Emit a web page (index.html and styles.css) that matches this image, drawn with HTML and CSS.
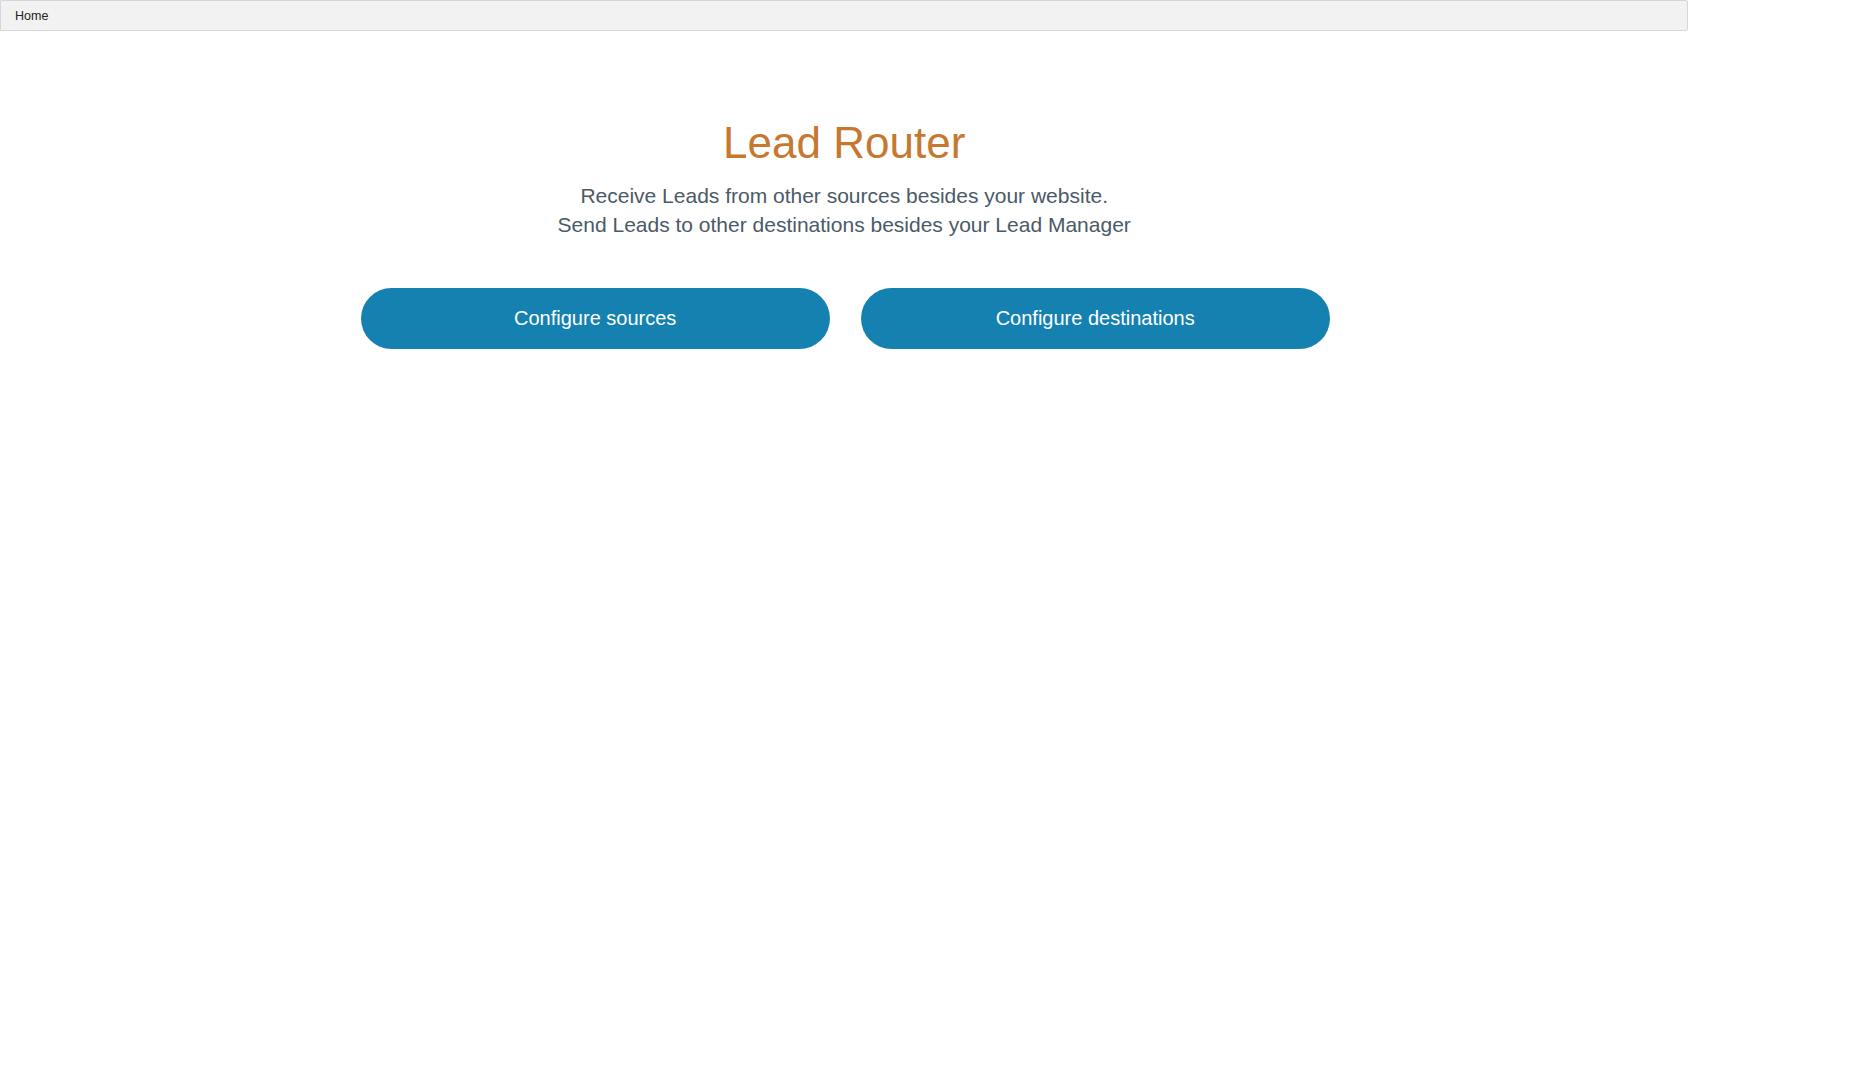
FILE: index.html
```html
<!DOCTYPE html>
<html lang="en">
<head>
<meta charset="utf-8">
<title>Lead Router</title>
<link rel="stylesheet" href="styles.css">
</head>
<body>
<div class="page">
  <nav class="breadcrumb"><span class="crumb">Home</span></nav>
  <main class="hero">
    <h1 class="title">Lead Router</h1>
    <p class="subtitle">Receive Leads from other sources besides your website.<br>Send Leads to other destinations besides your Lead Manager</p>
    <div class="actions">
      <a class="btn" href="#">Configure sources</a>
      <a class="btn" href="#">Configure destinations</a>
    </div>
  </main>
</div>
</body>
</html>
```
FILE: styles.css
```css
html, body {
  margin: 0;
  padding: 0;
  background: #ffffff;
  font-family: "Liberation Sans", Arial, Helvetica, sans-serif;
}
.page {
  width: 90%;
}
.breadcrumb {
  box-sizing: border-box;
  height: 31px;
  border: 1px solid #d6d6d6;
  background: #f2f2f2;
  padding: 0 14px;
  display: flex;
  align-items: center;
  border-radius: 0 2px 2px 0;
}
.crumb {
  font-size: 12.5px;
  color: #222222;
  line-height: 16px;
  padding-top: 1px;
}
.hero {
  display: flex;
  flex-direction: column;
  align-items: center;
  text-align: center;
}
.title {
  margin: 86px 0 0;
  font-size: 44px;
  line-height: 52px;
  font-weight: normal;
  color: #c6782f;
}
.subtitle {
  margin: 12px 0 0;
  font-size: 21px;
  line-height: 29px;
  color: #4b5a67;
}
.actions {
  margin-top: 49px;
  margin-left: 2px;
  display: flex;
  gap: 31px;
}
.btn {
  width: 469px;
  height: 61px;
  border-radius: 31px;
  background: #1581b0;
  color: #ffffff;
  font-size: 20px;
  text-decoration: none;
  display: flex;
  align-items: center;
  justify-content: center;
}
```
